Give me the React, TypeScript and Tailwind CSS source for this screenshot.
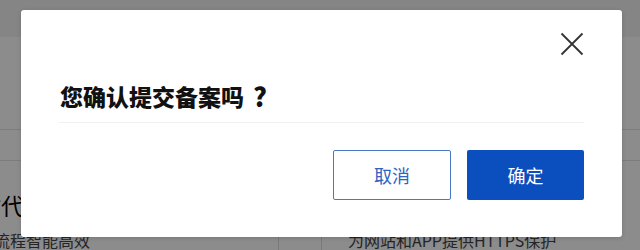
import React from "react";

const font = { fontFamily: '"Noto Sans CJK SC", "Noto Sans", sans-serif' };

export default function App() {
  return (
    <div className="relative w-[640px] h-[250px] overflow-hidden bg-white" style={font}>
      {/* background page */}
      <div className="flex flex-col w-full h-full">
        <div className="h-[38px] bg-[#f2f2f2]" />
        <div className="h-[97px] border-b border-[#e2e2e2]" />
        <div className="h-[32px] border-b border-[#e2e2e2]" />
        <div className="flex h-[70px] items-start pt-[33px]">
          <span className="ml-[-22px] text-[23px] leading-[23px] text-[#000]">时代</span>
        </div>
        <div className="flex items-start h-[20px] text-[16px] leading-[20px] text-[#444]">
          <span className="ml-[-6px] w-[284px]">流程智能高效</span>
          <div className="w-[44px] h-full border-l border-r border-[#ddd]" />
          <span className="ml-[26px]">为网站和APP提供HTTPS保护</span>
        </div>
      </div>

      {/* overlay */}
      <div className="absolute inset-0 bg-black/45 pt-[10px] pl-[21px]">
        <div className="w-[601px] h-[227px] bg-white rounded-[3px] shadow-[0_1px_4px_rgba(0,0,0,0.15)] px-[38px] pt-[22px] flex flex-col">
          <div className="flex justify-end h-[24px]">
            <svg width="24" height="24" viewBox="0 0 24 24">
              <path d="M1.5 1.5 L22.5 22.5 M22.5 1.5 L1.5 22.5" stroke="#333" strokeWidth="1.8" fill="none" />
            </svg>
          </div>
          <div className="mt-[24px] pl-[1px] text-[23px] leading-[32px] font-black text-[#111] flex items-center">
            <span>您确认提交备案吗</span>
            <span className="ml-[9px] text-[26px]">?</span>
          </div>
          <div className="mt-[10px] h-px bg-[#f0f0f0]" />
          <div className="mt-[27px] flex justify-end gap-[16px]">
            <button className="w-[118px] h-[50px] rounded-[2px] border-[1.5px] border-[#4a78c6] bg-white text-[18px] text-[#2f63bf]">
              取消
            </button>
            <button className="w-[117px] h-[50px] rounded-[2px] bg-[#0b4fbf] text-[18px] text-white">
              确定
            </button>
          </div>
        </div>
      </div>
    </div>
  );
}
